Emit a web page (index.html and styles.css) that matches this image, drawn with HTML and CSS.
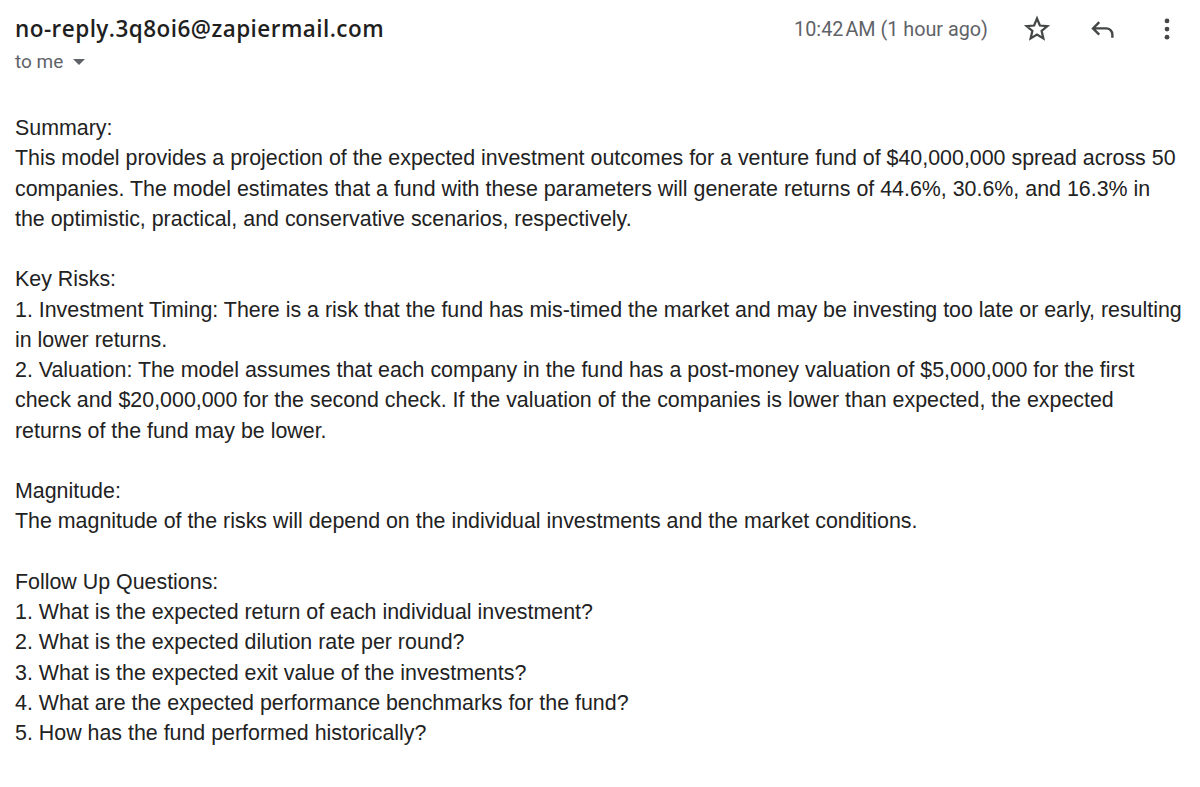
FILE: index.html
```html
<!DOCTYPE html>
<html>
<head>
<meta charset="utf-8">
<link rel="stylesheet" href="styles.css">
</head>
<body>
<div class="mail">
  <div class="header">
    <div class="from">
      <div class="sender">no-reply.3q8oi6@zapiermail.com</div>
      <div class="to">to me <svg class="caret" viewBox="0 0 10 5" width="12" height="6"><path d="M0 0 L10 0 L5 5 Z" fill="#5f6368"/></svg></div>
    </div>
    <div class="meta">
      <span class="time">10:42&#8202;AM (1 hour ago)</span>
      <svg class="icon star" viewBox="0 0 24 24" width="30" height="30"><path d="M12 3.6l2.3 5.6 6 .5-4.6 3.9 1.4 5.9L12 16.4l-5.1 3.1 1.4-5.9-4.6-3.9 6-.5z" fill="none" stroke="#444746" stroke-width="1.8" stroke-linejoin="miter"/></svg>
      <svg class="icon reply" viewBox="0 0 24 24" width="30" height="30"><path d="M9 6.5L4 11.5l5 5M4.5 11.5h10a5 5 0 0 1 5 5v2.5" fill="none" stroke="#444746" stroke-width="1.9"/></svg>
      <svg class="icon more" viewBox="0 0 24 24" width="30" height="30"><circle cx="12" cy="5.5" r="1.9" fill="#444746"/><circle cx="12" cy="12" r="1.9" fill="#444746"/><circle cx="12" cy="18.5" r="1.9" fill="#444746"/></svg>
    </div>
  </div>
  <div class="body">
    <p>Summary:<br>This model provides a projection of the expected investment outcomes for a venture fund of $40,000,000 spread across 50 companies. The model estimates that a fund with these parameters will generate returns of 44.6%, 30.6%, and 16.3% in the optimistic, practical, and conservative scenarios, respectively.</p>
    <p>Key Risks:<br>1. Investment Timing: There is a risk that the fund has mis-timed the market and may be investing too late or early, resulting in lower returns.<br>2. Valuation: The model assumes that each company in the fund has a post-money valuation of $5,000,000 for the first check and $20,000,000 for the second check. If the valuation of the companies is lower than expected, the expected returns of the fund may be lower.</p>
    <p>Magnitude:<br>The magnitude of the risks will depend on the individual investments and the market conditions.</p>
    <p>Follow Up Questions:<br>1. What is the expected return of each individual investment?<br>2. What is the expected dilution rate per round?<br>3. What is the expected exit value of the investments?<br>4. What are the expected performance benchmarks for the fund?<br>5. How has the fund performed historically?</p>
  </div>
</div>
</body>
</html>
```
FILE: styles.css
```css
html, body {
  margin: 0;
  padding: 0;
  background: #ffffff;
}
.mail {
  padding: 14px 0 0 15px;
}
.header {
  display: flex;
  justify-content: space-between;
  align-items: flex-start;
  padding-right: 18px;
}
.sender {
  font-family: "Open Sans", Roboto, sans-serif;
  font-weight: 600;
  font-size: 22.5px;
  letter-spacing: 0.45px;
  line-height: 30px;
  color: #1f1f1f;
}
.to {
  font-family: Roboto, "Noto Sans", sans-serif;
  font-size: 19px;
  line-height: 36px;
  color: #5f6368;
  display: flex;
  align-items: center;
  gap: 10px;
}
.meta {
  display: flex;
  align-items: center;
  height: 30px;
}
.time {
  font-family: Roboto, "Noto Sans", sans-serif;
  font-size: 19.8px;
  color: #5f6368;
  margin-right: 34px;
}
.icon {
  display: block;
}
.star {
  margin-right: 36px;
}
.reply {
  margin-right: 34px;
}
.body {
  margin-top: 33px;
  padding-right: 15px;
  font-family: "Liberation Sans", Arial, sans-serif;
  font-size: 21.4px;
  line-height: 30.25px;
  color: #222222;
}
.body p {
  margin: 0 0 30.25px 0;
}
```
